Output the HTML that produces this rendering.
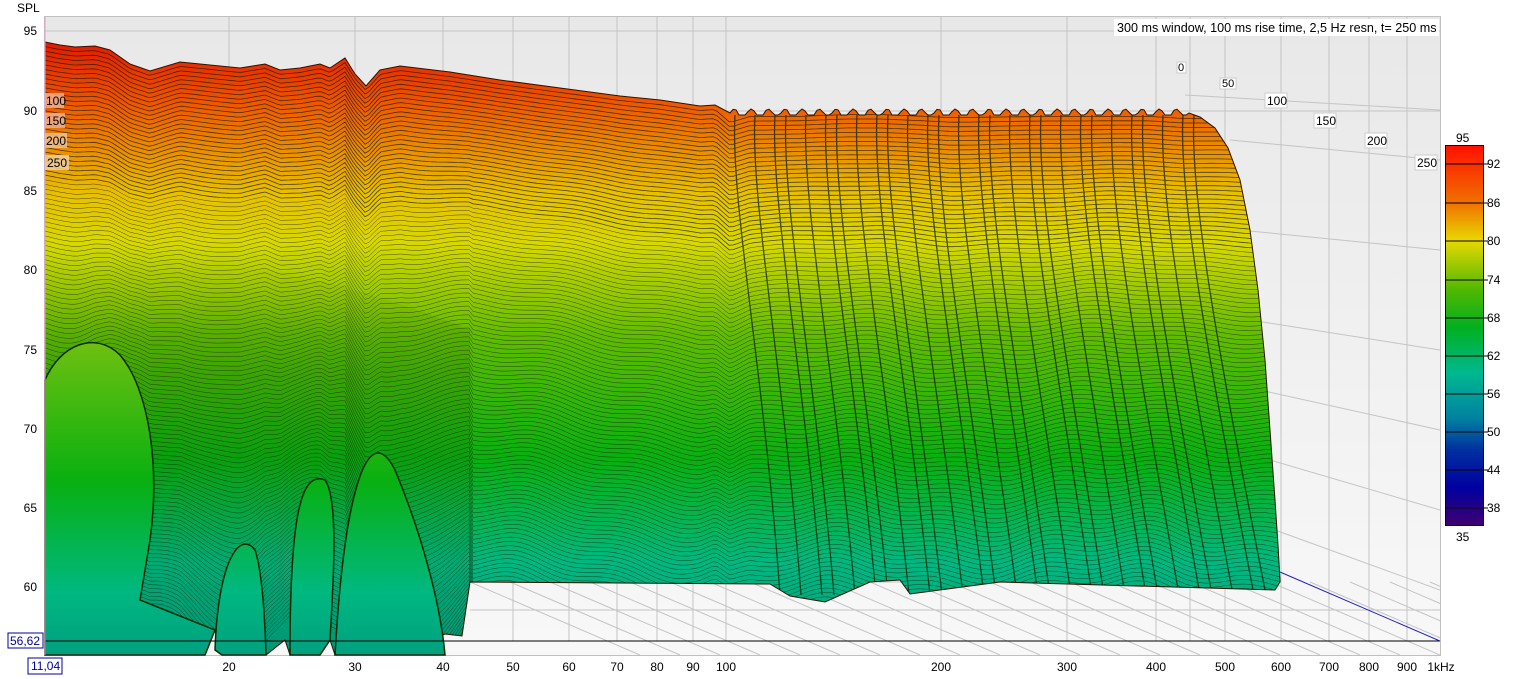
<!DOCTYPE html>
<html><head><meta charset="utf-8"><style>
html,body{margin:0;padding:0;background:#fff;width:1516px;height:679px;overflow:hidden}
svg{display:block}
text{font-family:"Liberation Sans",sans-serif;font-size:12px;fill:#000}
</style></head><body>
<svg id="s" width="1516" height="679" viewBox="0 0 1516 679" xmlns="http://www.w3.org/2000/svg">
<defs>
<linearGradient id="bg" x1="0" y1="0" x2="0" y2="1"><stop offset="0" stop-color="#e8e8e8"/><stop offset="1" stop-color="#f8f8f8"/></linearGradient>
<linearGradient id="sf" gradientUnits="userSpaceOnUse" x1="0" y1="40" x2="0" y2="655">
<stop offset="0" stop-color="#e01800"/><stop offset="0.1" stop-color="#ee5500"/><stop offset="0.25" stop-color="#e8c000"/><stop offset="0.33" stop-color="#d8d800"/><stop offset="0.48" stop-color="#60bc00"/><stop offset="0.68" stop-color="#08b010"/><stop offset="0.85" stop-color="#00b880"/><stop offset="1" stop-color="#009e80"/></linearGradient>
<linearGradient id="dm" gradientUnits="userSpaceOnUse" x1="0" y1="340" x2="0" y2="655">
<stop offset="0" stop-color="#70c010"/><stop offset="0.45" stop-color="#08b010"/><stop offset="0.8" stop-color="#00b880"/><stop offset="1" stop-color="#00a080"/></linearGradient>
<linearGradient id="dk" x1="0" y1="0" x2="0" y2="1"><stop offset="0" stop-color="#0a3000" stop-opacity="0"/><stop offset="0.3" stop-color="#0a3000" stop-opacity="0.2"/><stop offset="1" stop-color="#0a3000" stop-opacity="0.1"/></linearGradient>
<clipPath id="cp"><path id="cpp"/></clipPath>
<clipPath id="pa"><rect x="45" y="17" width="1395" height="638"/></clipPath>
<linearGradient id="cb" x1="0" y1="0" x2="0" y2="1">
<stop offset="0" stop-color="#ff1000"/><stop offset="0.15" stop-color="#f07000"/><stop offset="0.25" stop-color="#e8d800"/><stop offset="0.38" stop-color="#50b800"/><stop offset="0.48" stop-color="#00b020"/><stop offset="0.6" stop-color="#00b890"/><stop offset="0.72" stop-color="#0080a0"/><stop offset="0.8" stop-color="#0030a0"/><stop offset="0.9" stop-color="#0000a0"/><stop offset="1" stop-color="#400070"/></linearGradient>
</defs>
<rect x="45" y="17" width="1395" height="638" fill="url(#bg)"/>
<rect x="44.5" y="16.5" width="1396" height="639" fill="none" stroke="#c0c0c0"/>
<g id="grid" stroke="#c4c4c4" stroke-width="1" fill="none" clip-path="url(#pa)"></g>
<path id="surf" fill="url(#sf)" stroke="#301000" stroke-width="1"/>
<g id="lines" clip-path="url(#cp)" stroke="#1a1a00" stroke-width="0.6" fill="none" opacity="0.75"></g>
<g id="domes" stroke="#0a2a00" stroke-width="1.5"></g>
<line x1="45" y1="641" x2="1440" y2="641" stroke="#000"/>
<line x1="1280" y1="572" x2="1440" y2="641" stroke="#2020c0"/>
<line x1="45" y1="17" x2="45" y2="655" stroke="#e0a0c0"/>
<text x="17" y="12">SPL</text>
<g text-anchor="end">
<text x="37" y="35">95</text><text x="37" y="115">90</text><text x="37" y="195">85</text><text x="37" y="274">80</text><text x="37" y="354">75</text><text x="37" y="433">70</text><text x="37" y="512">65</text><text x="37" y="591">60</text></g>
<rect x="8" y="633" width="35" height="15" fill="#fff" stroke="#0000a0"/><text x="10" y="645" style="fill:#0000a0">56,62</text>
<rect x="28" y="658" width="34" height="16" fill="#fff" stroke="#0000a0"/><text x="31" y="670" style="fill:#0000a0">11,04</text>
<g text-anchor="middle">
<text x="229" y="671">20</text><text x="355" y="671">30</text><text x="443" y="671">40</text><text x="513" y="671">50</text><text x="569" y="671">60</text><text x="617" y="671">70</text><text x="657" y="671">80</text><text x="693" y="671">90</text><text x="726" y="671">100</text><text x="941" y="671">200</text><text x="1067" y="671">300</text><text x="1156" y="671">400</text><text x="1225" y="671">500</text><text x="1281" y="671">600</text><text x="1329" y="671">700</text><text x="1369" y="671">800</text><text x="1407" y="671">900</text><text x="1441" y="671">1kHz</text></g>
<rect x="1114" y="19" width="325" height="17" fill="#fff"/>
<text x="1117" y="32" style="font-size:12.6px">300 ms window, 100 ms rise time,  2,5 Hz resn, t= 250 ms</text>
<g>
<rect x="1177" y="62" width="9" height="11" fill="#fff" stroke="#ccc"/><text x="1178" y="71" style="font-size:11px">0</text>
<rect x="1220" y="78" width="16" height="11" fill="#fff" stroke="#ccc"/><text x="1222" y="87" style="font-size:11px">50</text>
<rect x="1265" y="93" width="22" height="15" fill="#fff" stroke="#ccc"/><text x="1267" y="105">100</text>
<rect x="1314" y="113" width="22" height="15" fill="#fff" stroke="#ccc"/><text x="1316" y="125">150</text>
<rect x="1365" y="133" width="22" height="15" fill="#fff" stroke="#ccc"/><text x="1367" y="145">200</text>
<rect x="1415" y="155" width="22" height="15" fill="#fff" stroke="#ccc"/><text x="1417" y="167">250</text>
</g>
<g>
<rect x="45" y="93" width="19" height="15" fill="#f0b090" opacity="0.85"/><text x="46" y="105">100</text>
<rect x="45" y="113" width="20" height="15" fill="#f0b090" opacity="0.85"/><text x="46" y="125">150</text>
<rect x="45" y="133" width="22" height="15" fill="#f0c090" opacity="0.85"/><text x="46" y="145">200</text>
<rect x="45" y="155" width="24" height="15" fill="#f0d0a0" opacity="0.85"/><text x="47" y="167">250</text>
</g>
<rect x="1445.5" y="145.5" width="38" height="380" fill="url(#cb)" stroke="#000"/>
<g stroke="#000"><line x1="1445" y1="164" x2="1488" y2="164"/><line x1="1445" y1="203" x2="1488" y2="203"/><line x1="1445" y1="241" x2="1488" y2="241"/><line x1="1445" y1="280" x2="1488" y2="280"/><line x1="1445" y1="318" x2="1488" y2="318"/><line x1="1445" y1="356" x2="1488" y2="356"/><line x1="1445" y1="394" x2="1488" y2="394"/><line x1="1445" y1="432" x2="1488" y2="432"/><line x1="1445" y1="470" x2="1488" y2="470"/><line x1="1445" y1="508" x2="1488" y2="508"/></g>
<text x="1456" y="142">95</text><text x="1456" y="541">35</text>
<g><text x="1487" y="168">92</text><text x="1487" y="207">86</text><text x="1487" y="245">80</text><text x="1487" y="284">74</text><text x="1487" y="322">68</text><text x="1487" y="360">62</text><text x="1487" y="398">56</text><text x="1487" y="436">50</text><text x="1487" y="474">44</text><text x="1487" y="512">38</text></g>
</svg>
<script>
(function(){
var NS="http://www.w3.org/2000/svg";
function el(t,a,p){var e=document.createElementNS(NS,t);for(var k in a)e.setAttribute(k,a[k]);p.appendChild(e);return e;}
var g=document.getElementById('grid');
var vx=[229,355,443,513,569,617,657,693,726,941,1067,1156,1190,1225,1281,1329,1369,1407];
vx.forEach(function(x){el('line',{x1:x,y1:17,x2:x,y2:641},g);});
[31,111].forEach(function(y){el('line',{x1:45,y1:y,x2:1440,y2:y},g);});
[[1185,95,1440,110],[1230,140,1440,160],[1240,230,1440,250],[1250,320,1440,350],[1260,390,1440,430],[1270,460,1440,510],[1275,530,1440,590]].forEach(function(a){el('line',{x1:a[0],y1:a[1],x2:a[2],y2:a[3]},g);});
el('line',{x1:470,y1:582,x2:1280,y2:582},g);
el('line',{x1:470,y1:610,x2:1440,y2:610},g);
for(var i=0;i<26;i++){var x0=470+i*40;el('line',{x1:x0,y1:582,x2:x0+170,y2:655},g);}
var tp=[[45,42],[60,45],[75,47],[95,46],[110,50],[130,64],[150,71],[180,62],[200,64],[240,68],[265,64],[280,70],[300,68],[320,64],[330,68],[345,58],[355,74],[366,86],[380,70],[400,66],[450,72],[500,80],[560,88],[620,96],[660,100],[700,106],[715,105],[730,118],[750,112],[800,112],[850,110],[880,110],[950,113],[1050,112],[1150,112],[1185,114],[1200,117],[1215,128],[1228,148],[1240,180],[1250,230],[1258,290],[1265,360],[1270,430],[1275,500],[1278,545],[1280,580]];
var top2=[];
tp.forEach(function(p){if(p[0]<730)top2.push(p);});
for(var x=730;x<=1190;x+=3){var ph=((x-730)%17)/17;top2.push([x,113+(ph<0.5? -4*Math.sin(ph*Math.PI*2):2)]);}
tp.forEach(function(p){if(p[0]>1190)top2.push(p);});
function top(x){for(var i=1;i<tp.length;i++){if(x<=tp[i][0]){var a=tp[i-1],b=tp[i];var t=(x-a[0])/(b[0]-a[0]);return a[1]+t*(b[1]-a[1]);}}return tp[tp.length-1][1];}
var bot=[[1280,582],[1275,590],[1000,582],[910,594],[900,580],[870,582],[825,602],[790,596],[770,584],[470,582],[462,636],[445,634],[420,645],[400,655],[335,655],[330,640],[320,655],[290,655],[285,640],[266,655],[222,655],[215,630],[205,655],[45,655]];
var d="M"+top2.map(function(p){return p[0]+','+p[1].toFixed(1)}).join(' L')+" L"+bot.map(function(p){return p.join(',')}).join(' L')+" Z";
document.getElementById('surf').setAttribute('d',d);
document.getElementById('cpp').setAttribute('d',d);
var L=document.getElementById('lines');
el('path',{d:"M45,260 Q250,240 470,330 L470,655 L45,655 Z",fill:'url(#dk)',stroke:'none'},L);
for(var i=1;i<130;i++){
 var pts=[],f=i/130;
 for(var x=45;x<=1285;x+=4){
  var y=top(Math.min(x,1185))+i*4.5+Math.sin(x*0.06+i*0.05)*6*f+Math.sin(x*0.021)*10*f;
  if(x<470) y+=Math.sin(x*0.035)*40*f*f;
  pts.push(x+','+y.toFixed(1));
 }
 el('polyline',{points:pts.join(' '),'stroke-width':i<30?0.8:0.5},L);
}
for(var k=0;k<28;k++){
 var x0=735+k*17+(k%3)*3;
 var p="M"+x0+",115 C"+(x0-5)+",200 "+(x0+30)+",380 "+(x0+45+k)+",595";
 el('path',{d:p,'stroke-width':1.3,stroke:'#102000'},L);
}
var D=document.getElementById('domes');
el('path',{d:"M45,380 C60,345 95,330 120,355 C150,390 160,470 150,540 L140,600 L215,630 L205,655 L45,655 Z",fill:'url(#dm)'},D);
el('path',{d:"M215,650 C218,560 240,530 255,550 C262,570 265,620 266,655 L222,655 Z",fill:'url(#dm)'},D);
el('path',{d:"M290,655 C290,520 300,470 325,480 C340,500 332,600 330,640 L320,655 Z",fill:'url(#dm)'},D);
el('path',{d:"M335,655 C345,480 370,420 395,470 C420,530 440,600 445,655 Z",fill:'url(#dm)'},D);
})();
</script>
</body></html>
